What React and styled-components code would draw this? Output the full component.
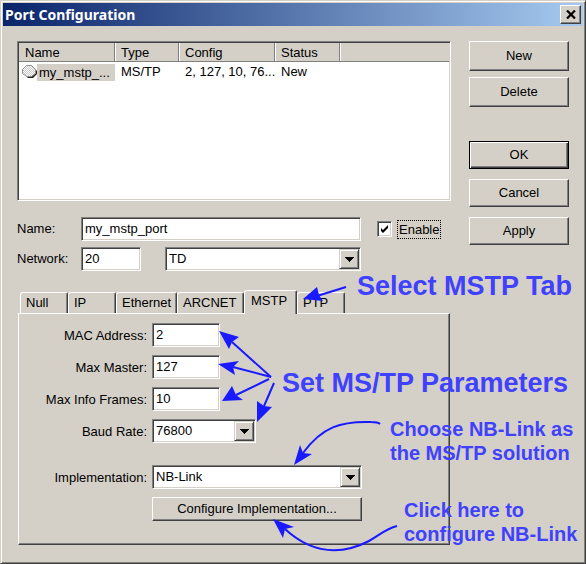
import React from "react";
import styled, { createGlobalStyle, css } from "styled-components";

const face = "#d4d0c8";
const ink = "#404040";
const shade = "#808080";
const note = "#4040ff";
const arrow = "#1a1aff";

const GlobalStyle = createGlobalStyle`
  * { box-sizing: border-box; }
  body { margin: 0; background: ${face}; }
  body, button, input, select, table {
    font-family: "Liberation Sans", Arial, sans-serif;
    font-size: 13px;
    line-height: 16px;
    color: #000;
  }
`;

const sunken = css`
  border: 1px solid;
  border-color: ${shade} #fff #fff ${shade};
  box-shadow: inset 1px 1px 0 ${ink}, inset -1px -1px 0 ${face};
  background: #fff;
`;

const raised = css`
  border: 1px solid;
  border-color: #fff ${ink} ${ink} #fff;
  box-shadow: inset -1px -1px 0 ${shade};
  background: ${face};
`;

const Dialog = styled.main`
  position: relative;
  min-height: 100vh;
  background: ${face};
  border: 1px solid;
  border-color: ${face} ${ink} ${ink} ${face};
  box-shadow: inset 1px 1px 0 #fff, inset -1px -1px 0 ${shade};
  padding: 2px;
`;

const TitleBar = styled.header`
  display: flex;
  align-items: center;
  justify-content: space-between;
  height: 23px;
  padding: 0 2px;
  background: linear-gradient(to right, #0a246a, #a6caf0);
`;

const Title = styled.h1`
  margin: 0;
  font: bold 14px/20px "Noto Sans", "Open Sans", sans-serif;
  color: #fff;
`;

const CloseButton = styled.button`
  ${raised}
  width: 21px;
  height: 19px;
  padding: 0;
  display: grid;
  place-items: center;
`;

const Body = styled.div`
  padding: 15px 14px 16px;
`;

const Upper = styled.div`
  display: grid;
  grid-template-columns: 1fr 100px;
  column-gap: 18px;
`;

const ListBox = styled.div`
  ${sunken}
  height: 160px;
  margin-bottom: 16px;
  padding: 1px;
  overflow: hidden;
`;

const Table = styled.table`
  width: 100%;
  table-layout: fixed;
  border-collapse: separate;
  border-spacing: 0;
`;

const Column = styled.col`
  width: ${(p) => p.$width};
`;

const HeadCell = styled.th`
  height: 19px;
  padding: 2px 6px 0;
  font-weight: normal;
  text-align: left;
  line-height: 16px;
  background: ${face};
  border-right: 1px solid ${shade};
  border-bottom: 1px solid ${shade};
  box-shadow: inset 1px 0 0 #fff;
  &:first-child { box-shadow: none; }
  &:last-child { border-right: 0; }
`;

const Cell = styled.td`
  height: 19px;
  padding: 1px 0 0 6px;
  white-space: nowrap;
`;

const NameCell = styled(Cell)`
  padding: 1px 0 0 3px;
`;

const Entry = styled.div`
  display: flex;
  align-items: center;

  svg { flex: none; }
`;

const Selected = styled.span`
  flex: 1;
  padding: 0 2px;
  line-height: 17px;
  background: ${face};
`;

const Actions = styled.div`
  display: flex;
  flex-direction: column;
  gap: 10px;
`;

const ActionPair = styled.div`
  display: grid;
  gap: 6px;
  margin-bottom: 24px;
`;

const Button = styled.button`
  ${raised}
  width: 100%;
  height: ${(p) => (p.$tall ? "30px" : "28px")};
  padding: 0 4px;
  ${(p) =>
    p.$primary &&
    css`
      border-color: #000;
      box-shadow: inset 1px 1px 0 #fff, inset -1px -1px 0 ${ink},
        inset -2px -2px 0 ${shade};
    `}
`;

const Form = styled.div`
  display: grid;
  grid-template-columns: 64px 1fr 90px;
  row-gap: 6px;
  align-items: center;
`;

const Field = styled.input`
  ${sunken}
  width: ${(p) => p.$width || "100%"};
  height: 24px;
  padding: 0 3px 1px;
`;

const NetworkFields = styled.div`
  display: grid;
  grid-template-columns: 60px 1fr;
  column-gap: 24px;
`;

const Check = styled.div`
  display: flex;
  align-items: center;
  gap: 5px;
  padding-left: 16px;
`;

const CheckInput = styled.input`
  ${sunken}
  appearance: none;
  width: 15px;
  height: 16px;
  margin: 0;
  flex: none;
  background: #fff
    url("data:image/svg+xml,%3Csvg xmlns='http://www.w3.org/2000/svg' width='9' height='9'%3E%3Cpath d='M1 3v3l2 2 5-5V0L3 5z'/%3E%3C/svg%3E")
    center no-repeat;
`;

const CheckLabel = styled.label`
  padding: 0 1px;
  line-height: 17px;
  border: 1px dotted #000;
`;

const ComboBox = styled.div`
  ${sunken}
  display: grid;
  grid-template-columns: 1fr 20px;
  width: ${(p) => p.$width || "100%"};
  height: 24px;
  padding: 1px;
`;

const ComboSelect = styled.select`
  grid-area: 1 / 1 / 2 / 3;
  appearance: none;
  width: 100%;
  height: 20px;
  padding: 0 22px 0 2px;
  border: 0;
  background: transparent;
`;

const ComboArrow = styled.span`
  ${raised}
  border-color: ${face} ${ink} ${ink} ${face};
  box-shadow: inset 1px 1px 0 #fff, inset -1px -1px 0 ${shade};
  grid-area: 1 / 2;
  display: grid;
  place-items: center;
  pointer-events: none;
`;

const Tabs = styled.div`
  display: flex;
  align-items: flex-end;
  height: 23px;
  margin-top: 19px;
  padding-left: 3px;
`;

const Tab = styled.button`
  height: 21px;
  min-width: ${(p) => p.$width || 48}px;
  padding: 0 4px 0 5px;
  text-align: left;
  background: ${face};
  border: solid;
  border-width: 1px 1px 0;
  border-color: #fff ${ink} #fff #fff;
  box-shadow: inset -1px 0 0 ${shade};
  border-radius: 3px 2px 0 0;
  ${(p) =>
    p.$active &&
    css`
      height: 24px;
      margin-bottom: -1px;
      padding: 0 6px 3px;
      z-index: 1;
    `}
`;

const Panel = styled.section`
  width: calc(100% - 120px);
  min-height: 232px;
  margin-left: 1px;
  padding: 9px 87px 23px 6px;
  border: 1px solid;
  border-color: #fff ${ink} ${ink} #fff;
  box-shadow: inset -1px -1px 0 ${shade};
`;

const Settings = styled.div`
  display: grid;
  grid-template-columns: 122px 1fr;
  column-gap: 5px;
  row-gap: 8px;
  align-items: center;
`;

const SettingLabel = styled.label`
  text-align: right;
  padding-top: 2px;
`;

const Implementation = styled(Settings)`
  margin-top: 22px;
`;

const ConfigureButton = styled(Button)`
  grid-column: 2;
  height: 24px;
`;

const Annotations = styled.div`
  position: absolute;
  inset: -1px;
  pointer-events: none;
`;

const Arrows = styled.svg`
  position: absolute;
  top: 0;
  left: 0;
  width: 586px;
  height: 564px;
`;

const Note = styled.p`
  position: absolute;
  left: ${(p) => p.$x}px;
  top: ${(p) => p.$y}px;
  margin: 0;
  white-space: nowrap;
  font-weight: bold;
  font-size: ${(p) => (p.$large ? "27px" : "20px")};
  line-height: ${(p) => (p.$large ? "30px" : "24px")};
  color: ${note};
`;

const arrows = [
  ["M346 287 L317 296", "303,299 317,287 319,295 323,301"],
  ["M271 377 L232 342", "219,331 239,337 232,342 229,349"],
  ["M271 377 L233 367", "218,364 239,361 233,367 235,375"],
  ["M269 379 L236 395", "222,401 232,386 236,395 243,400"],
  ["M274 383 L264 406", "257,422 257,401 264,406 272,407"],
  ["M380 424 Q378 422 371 422 C341 421 322 427 303 453", "294,465 300,445 303,453 312,454"],
  ["M397 526 C385 529 380 535 369 541 C340 556 311 553 285 529", "273,519 294,527 285,529 283,538"],
];

function Combo({ id, value, width, label }) {
  return (
    <ComboBox $width={width}>
      <ComboSelect id={id} defaultValue={value} aria-label={label}>
        <option>{value}</option>
      </ComboSelect>
      <ComboArrow>
        <svg width="9" height="5" shapeRendering="crispEdges" aria-hidden="true">
          <path d="M0 0H9L4.5 5Z" />
        </svg>
      </ComboArrow>
    </ComboBox>
  );
}

function PortIcon() {
  return (
    <svg width="15" height="14" viewBox="0 0 15 14" aria-hidden="true">
      <defs>
        <pattern id="dots" width="2" height="2" patternUnits="userSpaceOnUse">
          <path fill="#fff" d="M0 0h2v2H0z" />
          <path fill="#c8c8c8" d="M0 0h1v1H0zM1 1h1v1H1z" />
        </pattern>
      </defs>
      <path fill="#202020" d="M5 2h6l4 4v3l-4 4H6L2 9z" />
      <path fill="url(#dots)" stroke="#909090" d="M4.5 .5h5l4 4v4l-4 3h-5l-4-3v-4z" />
    </svg>
  );
}

function PortList() {
  return (
    <ListBox>
      <Table>
        <colgroup>
          <Column $width="96px" />
          <Column $width="64px" />
          <Column $width="96px" />
          <Column $width="65px" />
          <Column $width="auto" />
        </colgroup>
        <thead>
          <tr>
            <HeadCell>Name</HeadCell>
            <HeadCell>Type</HeadCell>
            <HeadCell>Config</HeadCell>
            <HeadCell>Status</HeadCell>
            <HeadCell />
          </tr>
        </thead>
        <tbody>
          <tr>
            <NameCell>
              <Entry>
                <PortIcon />
                <Selected>my_mstp_...</Selected>
              </Entry>
            </NameCell>
            <Cell>MS/TP</Cell>
            <Cell>2, 127, 10, 76...</Cell>
            <Cell>New</Cell>
            <Cell />
          </tr>
        </tbody>
      </Table>
    </ListBox>
  );
}

export default function App() {
  return (
    <>
      <GlobalStyle />
      <Dialog>
        <TitleBar>
          <Title>Port Configuration</Title>
          <CloseButton aria-label="Close">
            <svg width="10" height="9" viewBox="0 0 10 9" aria-hidden="true">
              <path d="M1 0.5L9 8.5M9 0.5L1 8.5" stroke="#000" strokeWidth="2.2" />
            </svg>
          </CloseButton>
        </TitleBar>
        <Body>
          <Upper>
            <div>
              <PortList />
              <Form>
                <label htmlFor="name">Name:</label>
                <Field id="name" defaultValue="my_mstp_port" />
                <Check>
                  <CheckInput type="checkbox" id="enable" defaultChecked />
                  <CheckLabel htmlFor="enable">Enable</CheckLabel>
                </Check>
                <label htmlFor="network">Network:</label>
                <NetworkFields>
                  <Field id="network" defaultValue="20" />
                  <Combo id="network-name" value="TD" label="Network name" />
                </NetworkFields>
              </Form>
            </div>
            <Actions>
              <ActionPair>
                <Button $tall>New</Button>
                <Button $tall>Delete</Button>
              </ActionPair>
              <Button $primary>OK</Button>
              <Button>Cancel</Button>
              <Button>Apply</Button>
            </Actions>
          </Upper>
          <Tabs role="tablist">
            <Tab role="tab">Null</Tab>
            <Tab role="tab">IP</Tab>
            <Tab role="tab" $width={61}>Ethernet</Tab>
            <Tab role="tab" $width={67}>ARCNET</Tab>
            <Tab role="tab" $width={53} $active aria-selected="true">MSTP</Tab>
            <Tab role="tab">PTP</Tab>
          </Tabs>
          <Panel role="tabpanel">
            <Settings>
              <SettingLabel htmlFor="mac">MAC Address:</SettingLabel>
              <Field id="mac" defaultValue="2" $width="68px" />
              <SettingLabel htmlFor="master">Max Master:</SettingLabel>
              <Field id="master" defaultValue="127" $width="68px" />
              <SettingLabel htmlFor="frames">Max Info Frames:</SettingLabel>
              <Field id="frames" defaultValue="10" $width="68px" />
              <SettingLabel htmlFor="baud">Baud Rate:</SettingLabel>
              <Combo id="baud" value="76800" width="104px" />
            </Settings>
            <Implementation>
              <SettingLabel htmlFor="implementation">Implementation:</SettingLabel>
              <Combo id="implementation" value="NB-Link" />
              <ConfigureButton>Configure Implementation...</ConfigureButton>
            </Implementation>
          </Panel>
        </Body>
        <Annotations>
          <Arrows viewBox="0 0 586 564" aria-hidden="true">
            {arrows.map(([line, head]) => (
              <g key={head}>
                <path d={line} fill="none" stroke={arrow} strokeWidth="2" />
                <polygon points={head} fill={arrow} />
              </g>
            ))}
          </Arrows>
          <Note $large $x={357} $y={271}>Select MSTP Tab</Note>
          <Note $large $x={282} $y={368}>Set MS/TP Parameters</Note>
          <Note $x={390} $y={417}>Choose NB-Link as<br />the MS/TP solution</Note>
          <Note $x={404} $y={498}>Click here to<br />configure NB-Link</Note>
        </Annotations>
      </Dialog>
    </>
  );
}
